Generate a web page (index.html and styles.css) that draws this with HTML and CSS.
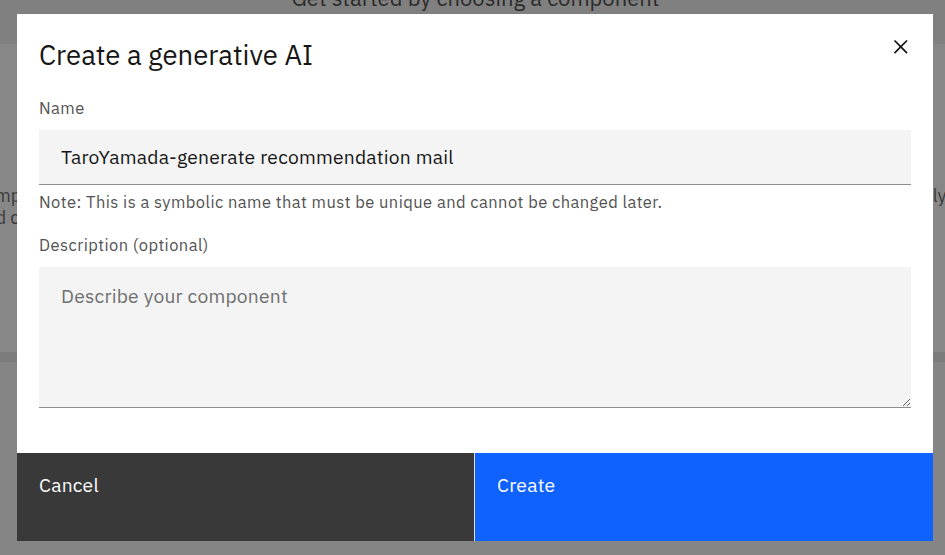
FILE: index.html
```html
<!DOCTYPE html>
<html lang="en">
<head>
<meta charset="utf-8">
<title>Create a generative AI</title>
<link rel="stylesheet" href="styles.css">
</head>
<body>
<div class="page">
  <header class="page-head">
    <h1 class="page-title">Get started by choosing a component</h1>
  </header>
  <section class="panel">
    <div class="panel-line">
      <div class="peek peek-left peek-l1"><span>Pick a component</span></div>
      <div class="peek peek-right"><span>quickly and</span></div>
    </div>
    <div class="panel-line">
      <div class="peek peek-left peek-l2"><span>and components</span></div>
    </div>
  </section>
  <div class="panel-shadow"></div>
</div>

<div class="overlay">
  <div class="modal" role="dialog" aria-labelledby="modal-title">
    <div class="modal-header">
      <h2 class="modal-title" id="modal-title">Create a generative AI</h2>
      <button class="modal-close" type="button" aria-label="Close">
        <svg viewBox="0 0 32 32" width="27.5" height="27.5" aria-hidden="true"><path d="M24 9.4L22.6 8 16 14.6 9.4 8 8 9.4 14.6 16 8 22.6 9.4 24 16 17.4 22.6 24 24 22.6 17.4 16 24 9.4z"/></svg>
      </button>
    </div>
    <div class="modal-body">
      <div class="field">
        <label class="field-label" for="name">Name</label>
        <input class="text-input" id="name" type="text" value="TaroYamada-generate recommendation mail">
        <div class="helper">Note: This is a symbolic name that must be unique and cannot be changed later.</div>
      </div>
      <div class="field field-desc">
        <label class="field-label" for="desc">Description (optional)</label>
        <textarea class="text-area" id="desc" placeholder="Describe your component"></textarea>
      </div>
    </div>
    <div class="modal-footer">
      <button class="btn btn-secondary" type="button">Cancel</button>
      <button class="btn btn-primary" type="button">Create</button>
    </div>
  </div>
</div>
</body>
</html>
```

FILE: styles.css
```css
* { box-sizing: border-box; }

html, body {
  margin: 0;
  width: 945px;
  height: 555px;
  overflow: hidden;
}

body {
  font-family: "IBM Plex Sans", "Noto Sans", "Open Sans", sans-serif;
  background: #858585;
  color: #161616;
}

/* dimmed page behind the modal */
.page {
  display: flex;
  flex-direction: column;
}

.page-head {
  height: 44px;
  background: #808080;
  display: flex;
  justify-content: center;
}

.page-title {
  margin: -13px 0 0 0;
  font-size: 22px;
  line-height: 22px;
  font-weight: 400;
  color: #2b2b2b;
  padding-left: 6px;
}

.panel {
  height: 308px;
  background: #878787;
  padding-top: 141px;
  display: flex;
  flex-direction: column;
}

.panel-line {
  height: 22px;
  display: flex;
  justify-content: space-between;
}

.peek {
  overflow: hidden;
  display: flex;
  white-space: nowrap;
  font-size: 18px;
  line-height: 22px;
  color: #3a3a3a;
}

.peek-left { justify-content: flex-end; }
.peek-l1 { width: 68px; }
.peek-l2 { width: 111px; }
.peek-right { justify-content: flex-start; width: 56px; }

.panel-shadow {
  height: 10px;
  background: #7c7c7c;
}

/* modal */
.overlay {
  position: fixed;
  inset: 0;
  display: flex;
  align-items: flex-start;
  padding: 14px 0 0 17px;
}

.modal {
  position: relative;
  width: 916px;
  height: 527px;
  background: #ffffff;
  display: flex;
  flex-direction: column;
}

.modal-header {
  padding: 22px 22px 22.5px 22px;
}

.modal-title {
  margin: 0;
  font-size: 27.5px;
  line-height: 38.5px;
  font-weight: 400;
  color: #161616;
}

.modal-close {
  position: absolute;
  top: 0;
  right: 0;
  width: 66px;
  height: 66px;
  border: 0;
  padding: 0 0 0 1px;
  background: transparent;
  display: flex;
  align-items: center;
  justify-content: center;
  cursor: pointer;
}

.modal-close svg { fill: #161616; }

.modal-body {
  flex: 1;
  padding: 0 22px;
  display: flex;
  flex-direction: column;
}

.field {
  display: flex;
  flex-direction: column;
}

.field-desc { margin-top: 21.5px; }

.field-label {
  font-size: 16.5px;
  line-height: 22px;
  letter-spacing: 0.44px;
  color: #525252;
  margin-bottom: 11px;
}

.text-input {
  height: 55px;
  border: 0;
  border-bottom: 1px solid #8d8d8d;
  background: #f4f4f4;
  padding: 0 22px 2px 22px;
  font-family: inherit;
  font-size: 19.25px;
  letter-spacing: 0.22px;
  color: #161616;
  outline: none;
}

.helper {
  margin-top: 5.5px;
  font-size: 16.5px;
  line-height: 22px;
  letter-spacing: 0.44px;
  color: #525252;
}

.text-area {
  height: 141px;
  border: 0;
  border-bottom: 1px solid #8d8d8d;
  background: #f4f4f4;
  padding: 15px 22px;
  font-family: inherit;
  font-size: 19.25px;
  line-height: 27.5px;
  letter-spacing: 0.22px;
  color: #161616;
  resize: vertical;
  outline: none;
}

.text-area::placeholder { color: #6f6f6f; }

.modal-footer {
  height: 88px;
  display: flex;
  gap: 1px;
  background: #e0e0e0;
}

.btn {
  flex: 1;
  border: 0;
  margin: 0;
  padding: 19px 22px 0 22px;
  text-align: left;
  align-self: stretch;
  display: flex;
  align-items: flex-start;
  font-family: inherit;
  font-size: 19.25px;
  line-height: 25px;
  letter-spacing: 0.22px;
  color: #ffffff;
  cursor: pointer;
}

.btn-secondary { width: 457px; flex: none; background: #393939; }
.btn-primary { background: #0f62fe; }
```
